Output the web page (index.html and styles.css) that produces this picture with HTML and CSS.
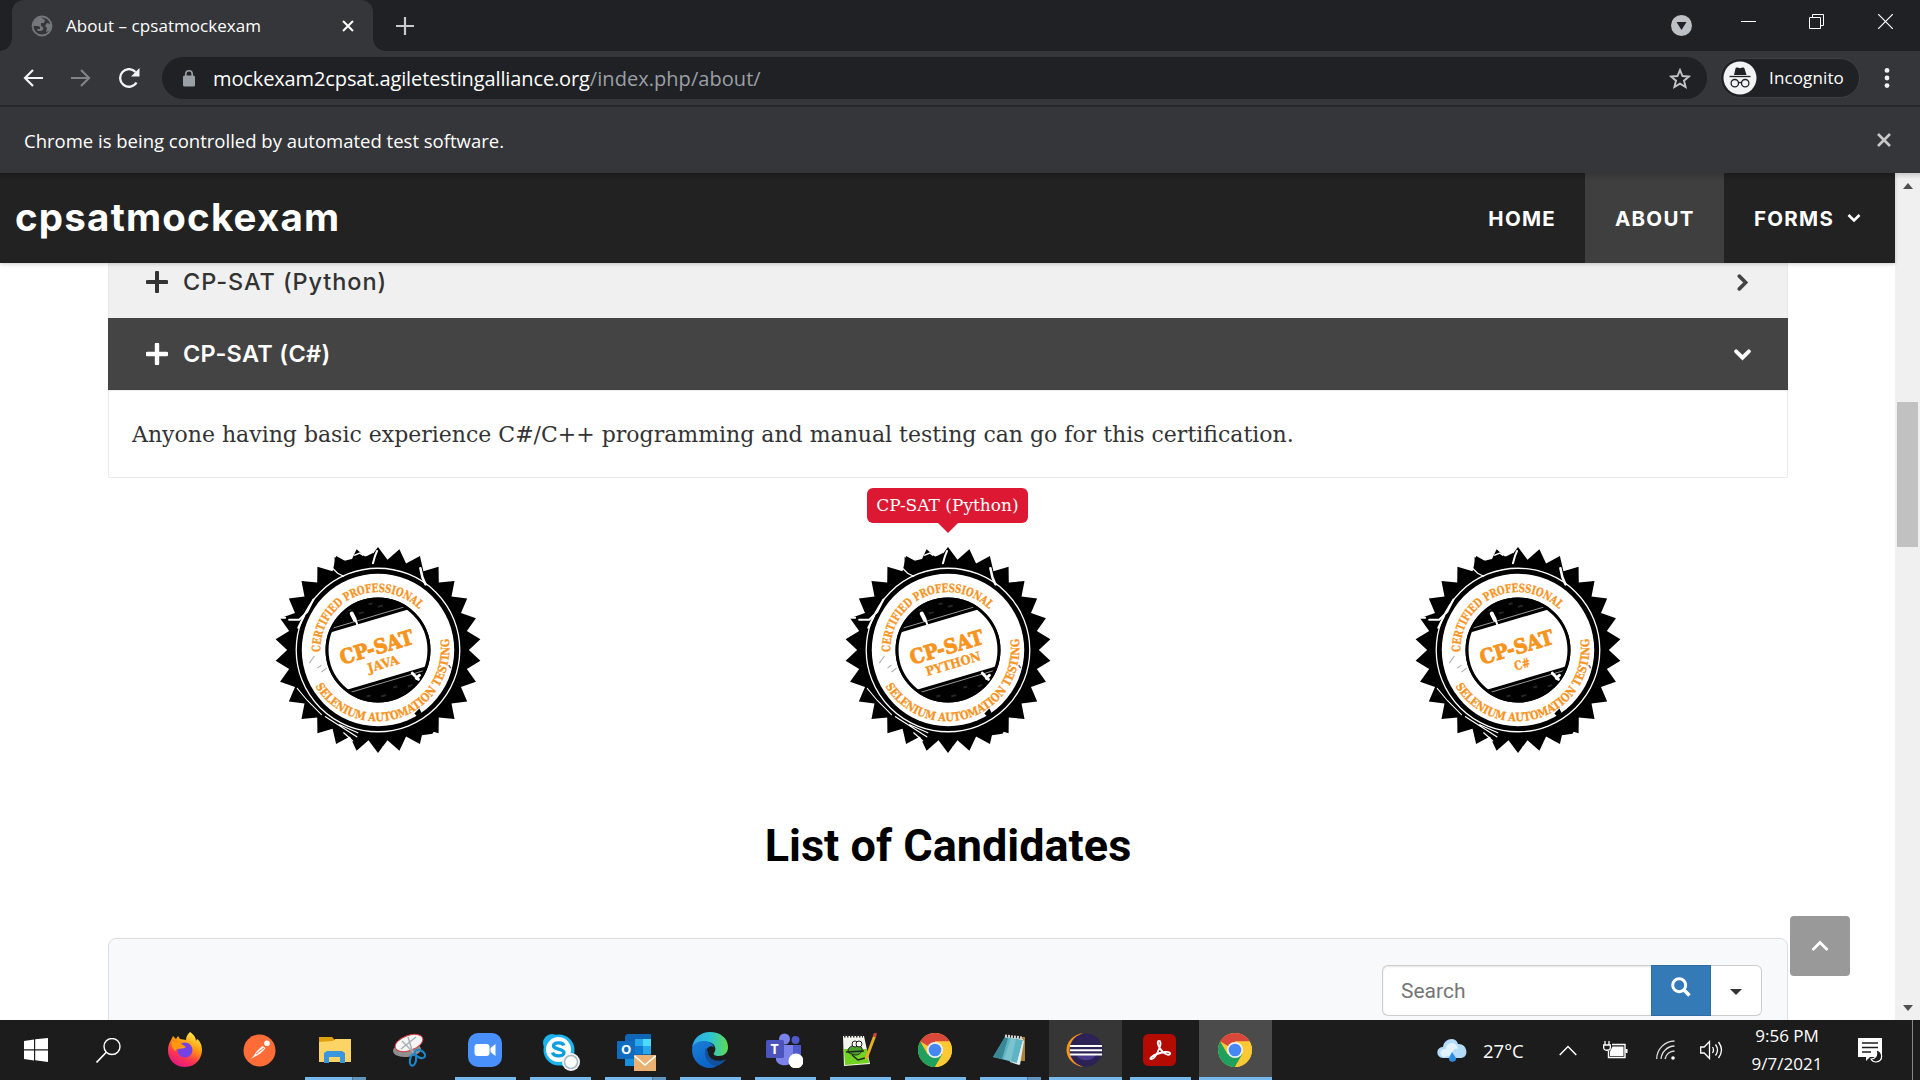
FILE: index.html
```html
<!DOCTYPE html>
<html lang="en">
<head>
<meta charset="utf-8">
<title>About – cpsatmockexam</title>
<link rel="stylesheet" href="styles.css">
</head>
<body>
<svg class="defs" width="0" height="0" aria-hidden="true">
  <defs>
    <path id="teeth" d="M0 0V-102L9.4-89.5 21.2-99.8 27.8-85.6 41.5-93.2 45-77.9 60-82.5 60.2-66.9 75.8-68.3 72.8-52.9 88.3-51 82.2-36.6 97-31.5 88-18.7 101.4-10.7 90 0Z"/>
    <path id="arc-top" d="M-57 2A57 57 0 0 1 46 -34"/>
    <path id="arc-bottom" d="M-62 36A71.500 71.500 0 0 0 70 -11"/>
    <clipPath id="inner"><circle r="50"/></clipPath>
    <g id="seal">
      <circle r="88"/>
      <use href="#teeth"/><use href="#teeth" transform="scale(-1 1)"/><use href="#teeth" transform="scale(1 -1)"/><use href="#teeth" transform="scale(-1 -1)"/>
      <path d="M-43-92l8 4 8-2 8-1 8-2 6-3 5 6v10h-43zM-40 80l8 8 5-4-4-8zM30 84l8-4 12-5 10-2-6 10-14 2z"/>
      <circle r="81" fill="none" stroke="#fff" stroke-width="1.300"/>
      <circle r="75.500" fill="#fff"/>
      <circle r="52"/>
      <g clip-path="url(#inner)">
        <g transform="rotate(-16.500)">
          <rect x="-60" y="-30" width="120" height="59" fill="#fff"/>
          <path d="M-60-33.500H60M-60 32.500H60" stroke="#aaa" stroke-width=".8"/>
          <path d="M-30-42h5M-18-46h4M-8-40h5M4-46h4M12-41h5M-24 41h4M-10 45h5M4 40h4M18 43h5" stroke="#262626" stroke-width="2"/>
        </g>
      </g>
      <circle r="50.500" fill="none" stroke="#000" stroke-width="3"/>
      <g fill="none" stroke="#fff" stroke-linecap="round">
        <path d="M-26-36l3 6" stroke-width="4"/><path d="M-22-29l2 5" stroke-width="2"/>
        <path d="M-5-86l2-7 2-5" stroke-width="2"/><path d="M-23-94l5-2 3 2" stroke-width="1.500"/>
        <path d="M42-81l2 9 3 7" stroke-width="2.500"/><path d="M-46-82l6 6 6 3" stroke-width="1.200"/>
        <path d="M-97-32h5M-88-30l10 0 8-8 6-12" stroke-width="2"/>
        <path d="M-73-34l-6 12" stroke-width="2"/>
        <path d="M-80 38l10 12 14 14" stroke-width="1"/><path d="M-52 66l14 9 17 11M-38 74l18 8M-34 82l9 8" stroke-width="1.200"/>
        <path d="M5 96h6" stroke-width="1.200"/><path d="M34 23l6 6M38 28l3-3" stroke-width="3"/>
      </g>
      <path d="M-68 13l5-7M-60 18l4-3M-56 22l5-4" stroke="#aaa" stroke-width="1"/>
      <path d="M70 15l2 3" stroke="#666" stroke-width="1.500"/>
      <path d="M36 63l5-5 2 4-3 5z"/>
      <g class="seal-ring">
        <text><textPath href="#arc-top" textLength="137" lengthAdjust="spacingAndGlyphs">CERTIFIED PROFESSIONAL</textPath></text>
        <text><textPath href="#arc-bottom" textLength="196" lengthAdjust="spacingAndGlyphs">SELENIUM AUTOMATION TESTING</textPath></text>
      </g>
      <text class="seal-name" transform="rotate(-16.500)" x="-38" y="4" textLength="75" lengthAdjust="spacingAndGlyphs">CP-SAT</text>
    </g>
    <symbol id="i-chrome" viewBox="0 0 34 34">
      <circle cx="17" cy="17" r="17" fill="#fcc934"/>
      <path d="M17 17L2.300 8.500A17 17 0 0 1 31.700 8.500H17Z" fill="#d9483b"/>
      <path d="M2.300 8.500A17 17 0 0 0 17 34L24.400 21.300 17 17 9.600 21.300Z" fill="#1fa15d"/>
      <path d="M17 8.500H31.700A17 17 0 0 1 17 34L24.400 21.300Z" fill="#fcc934"/>
      <circle cx="17" cy="17" r="8" fill="#f1f1f1"/><circle cx="17" cy="17" r="6.300" fill="#4587f3"/>
    </symbol>
  </defs>
</svg>

<header class="browser">
  <div class="tabstrip">
    <div class="tab">
      <svg class="favicon" viewBox="0 0 22 22"><circle cx="11" cy="11" r="9.500" fill="none" stroke="#74777c" stroke-width="1.800"/><path d="M10 2.500C5 3 2.500 7 2 11h5l2 1v2H6l1 2h3c2-1 3-2 2-4l-2-1V8h3l1-3-3-2zM20 9l-4-1-2 3 2 2-1 4 3-1c2-2 2.500-5 2-7z" fill="#74777c"/></svg>
      <span class="tab-title">About – cpsatmockexam</span>
      <svg class="tab-close" viewBox="0 0 12 12"><path d="M1 1l10 10M11 1L1 11" stroke="#fff" stroke-width="2"/></svg>
    </div>
    <svg class="new-tab" viewBox="0 0 18 18"><path d="M9 0v18M0 9h18" stroke="#c8cacd" stroke-width="2.200"/></svg>
    <div class="window-buttons">
      <svg width="21" height="21" viewBox="0 0 21 21"><circle cx="10.500" cy="10.500" r="10.500" fill="#bdc1c6"/><path d="M5.500 7h10l-5 8z" fill="#202124"/></svg>
      <svg width="15" height="15" viewBox="0 0 15 15"><path d="M0 7.500h15" stroke="#fff"/></svg>
      <svg width="15" height="15" viewBox="0 0 15 15"><path d="M.5 3.500h11v11H.5zM3.500 3.500v-3h11v11h-3" fill="none" stroke="#fff"/></svg>
      <svg width="15" height="15" viewBox="0 0 15 15"><path d="M0 0l15 15M15 0L0 15" stroke="#fff" stroke-width="1.200"/></svg>
    </div>
  </div>

  <div class="toolbar">
    <svg class="nav-icon" viewBox="0 0 20 18"><path d="M20 9H2M10 1L2 9l8 8" fill="none" stroke="#f1f3f4" stroke-width="2.200"/></svg>
    <svg class="nav-icon" viewBox="0 0 20 18"><path d="M0 9h18M10 1l8 8-8 8" fill="none" stroke="#828387" stroke-width="2.200"/></svg>
    <svg class="nav-reload" viewBox="0 0 21 20"><path d="M17.500 14.500A8.800 8.800 0 1 1 16.500 4" fill="none" stroke="#f1f3f4" stroke-width="2.300"/><path d="M20.500 0v8.500H12z" fill="#f1f3f4"/></svg>
    <div class="omnibox">
      <svg class="lock" viewBox="0 0 12 17"><rect y="5.500" width="12" height="11" rx="1.500" fill="#9aa0a6"/><path d="M2.800 6V4a3.200 3.200 0 0 1 6.400 0v2" fill="none" stroke="#9aa0a6" stroke-width="1.600"/></svg>
      <span class="url"><span class="host">mockexam2cpsat.agiletestingalliance.org</span><span class="path">/index.php/about/</span></span>
      <svg class="star" viewBox="0 0 22 21"><path d="M11 2l2.500 6 6.500.5-5 4.200 1.600 6.300L11 15.600 5.400 19 7 12.700 2 8.500 8.500 8z" fill="none" stroke="#c3c4c6" stroke-width="1.900"/></svg>
    </div>
    <div class="incognito">
      <svg viewBox="0 0 34 34"><circle cx="17" cy="17" r="16.500" fill="#f1f3f4"/><path d="M12.500 7.500q.5-1.500 2-1l2.500.7 2.500-.7q1.500-.5 2 1l2 6.500H11z" fill="#202124"/><path d="M6.500 15.500h21" stroke="#202124" stroke-width="1.300"/><circle cx="11.800" cy="22.200" r="3.700" fill="none" stroke="#202124" stroke-width="1.300"/><circle cx="22.200" cy="22.200" r="3.700" fill="none" stroke="#202124" stroke-width="1.300"/><path d="M15.500 22q1.500-1.200 3 0" fill="none" stroke="#202124" stroke-width="1.200"/></svg>
      <span class="incognito-label">Incognito</span>
    </div>
    <svg class="menu-dots" viewBox="0 0 6 20"><g fill="#f1f3f4"><circle cx="3" cy="2.400" r="2.400"/><circle cx="3" cy="10" r="2.400"/><circle cx="3" cy="17.600" r="2.400"/></g></svg>
  </div>

  <div class="infobar">
    <span class="infobar-text">Chrome is being controlled by automated test software.</span>
    <svg width="14" height="14" viewBox="0 0 14 14"><path d="M1 1l12 12M13 1L1 13" stroke="#c8c8c8" stroke-width="2.600"/></svg>
  </div>
</header>

<div class="viewport">
  <div class="page">
    <div class="site-header">
      <span class="site-title">cpsatmockexam</span>
      <nav class="site-nav">
        <a class="nav-home"><span>HOME</span></a>
        <a class="nav-about"><span>ABOUT</span></a>
        <a class="nav-forms"><span>FORMS</span><svg width="14" height="10" viewBox="0 0 14 10"><path d="M1.500 2L7 7.500 12.500 2" fill="none" stroke="#fff" stroke-width="2.600"/></svg></a>
      </nav>
    </div>

    <main class="content">
      <div class="accordion">
        <div class="acc-row acc-python">
          <svg class="plus" viewBox="0 0 22 22"><path d="M11 1.500v19M1.500 11h19" stroke="currentColor" stroke-width="4" stroke-linecap="round"/></svg>
          <span class="acc-label">CP-SAT (Python)</span>
          <svg class="chev" viewBox="0 0 16 16"><path d="M5 2l6 6-6 6" fill="none" stroke="#444" stroke-width="3.400" stroke-linecap="round"/></svg>
        </div>
        <div class="acc-row acc-open">
          <svg class="plus" viewBox="0 0 22 22"><path d="M11 1.500v19M1.500 11h19" stroke="currentColor" stroke-width="4.400" stroke-linecap="round"/></svg>
          <span class="acc-label">CP-SAT (C#)</span>
          <svg class="chev" viewBox="0 0 16 16"><path d="M2 5l6 6 6-6" fill="none" stroke="#fff" stroke-width="3.600" stroke-linecap="round"/></svg>
        </div>
        <div class="acc-body"><span class="acc-text">Anyone having basic experience C#/C++ programming and manual testing can go for this certification.</span></div>
      </div>

      <div class="badges">
        <div class="badge"><svg viewBox="-104 -104 208 208"><use href="#seal"/><text class="seal-sub" transform="rotate(-16.500)" x="-15" y="19" textLength="32" lengthAdjust="spacingAndGlyphs">JAVA</text></svg></div>
        <div class="badge"><span class="tooltip"><span class="tip-text">CP-SAT (Python)</span></span><svg viewBox="-104 -104 208 208"><use href="#seal"/><text class="seal-sub" transform="rotate(-16.500)" x="-27" y="19" textLength="56" lengthAdjust="spacingAndGlyphs">PYTHON</text></svg></div>
        <div class="badge"><svg viewBox="-104 -104 208 208"><use href="#seal"/><text class="seal-sub" transform="rotate(-16.500)" x="-8" y="19" textLength="16" lengthAdjust="spacingAndGlyphs">C#</text></svg></div>
      </div>

      <h2 class="list-title"><span>List of Candidates</span></h2>

      <div class="list-panel">
        <div class="search">
          <div class="search-input">Search</div>
          <div class="search-go"><svg width="20" height="20" viewBox="0 0 20 20"><circle cx="8.200" cy="8.200" r="6.500" fill="none" stroke="#fff" stroke-width="3"/><path d="M13 13l5.500 5.500" stroke="#fff" stroke-width="3.600"/></svg></div>
          <div class="search-more"><i></i></div>
        </div>
      </div>
      <div class="to-top"><svg width="18" height="12" viewBox="0 0 18 12"><path d="M1.500 10L9 2.500 16.500 10" fill="none" stroke="#fff" stroke-width="2.800"/></svg></div>
    </main>
  </div>
  <div class="scrollbar"><i class="arrow up"></i><i class="thumb"></i><i class="arrow down"></i></div>
</div>

<footer class="taskbar">
  <div class="start"><svg width="24" height="24" viewBox="0 0 24 24"><path d="M0 3l10-1.500V11.300H0zM11.200 1.300L24 0v11.300H11.200zM0 12.600h10v9.800L0 21zM11.200 12.600H24V24l-12.800-1.700z" fill="#fff"/></svg></div>
  <div class="start"><svg width="25" height="25" viewBox="0 0 25 25"><circle cx="16" cy="8.500" r="8" fill="none" stroke="#fff" stroke-width="1.400"/><path d="M10.300 14.300L.5 24.500" stroke="#fff" stroke-width="1.600"/></svg></div>
  <div class="apps">
    <div class="app"><svg width="36" height="36" viewBox="0 0 36 36"><defs><linearGradient id="ff" x1=".8" y1="0" x2=".3" y2="1"><stop offset="0" stop-color="#fff44f"/><stop offset=".4" stop-color="#ff980e"/><stop offset=".7" stop-color="#ff3750"/><stop offset="1" stop-color="#e31587"/></linearGradient></defs><path d="M23 0c-3 3-4 5-4 8l-6-1-2-3-2 3-3-3-4 8c-4 12 4 23 16 23 11 0 17-9 17-17 0-5-2-9-5-11l-1 2c0-4-3-7-6-9z" fill="url(#ff)"/><circle cx="18" cy="18" r="7.500" fill="#7542e5"/><path d="M5 9c5 1 7 0 11 4l3 2c-3 3-8 0-11 4-3-3-4-6-3-10z" fill="#ff980e"/></svg></div>
    <div class="app"><svg width="33" height="33" viewBox="0 0 33 33"><circle cx="16.500" cy="16.500" r="16" fill="#ff6c37"/><path d="M7.500 25c4-3 5-8 12-13l3 2c-5 7-10 8-13 10z" fill="#fff"/><circle cx="24" cy="9.300" r="2.800" fill="#fff"/><path d="M13 20l8-6" stroke="#ff6c37"/></svg></div>
    <div class="app open multi"><svg width="32" height="28" viewBox="0 0 32 28"><path d="M0 1h13l2 2v3H0z" fill="#e0a10c"/><path d="M0 6l14-1 2-2h16v23H0z" fill="#fcd365"/><path d="M5 27V17l3-2h15l3 2v10h-5v-6H10v6z" fill="#3a96dd"/></svg></div>
    <div class="app"><svg width="34" height="34" viewBox="0 0 34 34"><ellipse cx="14" cy="17" rx="14" ry="7" fill="#8d8f91" transform="rotate(-5 14 17)"/><ellipse cx="16" cy="10" rx="14.500" ry="7.500" fill="#f5f5f6" stroke="#dc3a3a" transform="rotate(-20 16 10)"/><path d="M15 4l5 16M9 8l11 11M23 4L8 16" stroke="#a9adb2" stroke-width="1.400"/><ellipse cx="27" cy="21" rx="5.500" ry="3.500" fill="none" stroke="#1d86c9" stroke-width="2.200" transform="rotate(30 27 21)"/><ellipse cx="20" cy="27" rx="3" ry="5.800" fill="none" stroke="#1d86c9" stroke-width="2.200" transform="rotate(10 20 27)"/></svg></div>
    <div class="app open"><svg width="34" height="34" viewBox="0 0 34 34"><rect width="34" height="34" rx="10" fill="#4a90fb"/><rect x="6.500" y="11" width="15" height="12" rx="3" fill="#fff"/><path d="M22.500 15l5-4v12l-5-4z" fill="#fff"/></svg></div>
    <div class="app open skype"><svg width="38" height="38" viewBox="0 0 38 38"><circle cx="10" cy="10" r="9" fill="#1cb4f0"/><circle cx="22" cy="23" r="10" fill="#1cb4f0"/><circle cx="17" cy="17" r="15.500" fill="#1cb4f0"/><circle cx="16.500" cy="16.500" r="12.500" fill="#fff"/><path d="M22 12.500c-1-3-9.500-4-10.500 0-.8 4 10.500 3 10.500 7 0 4.500-10 4.500-11.500 0" fill="none" stroke="#0c9fe0" stroke-width="3.400"/><circle cx="29" cy="29" r="9" fill="#f3f5f6"/><circle cx="29" cy="29" r="6.500" fill="#fff" stroke="#a9b9c3" stroke-width="1.600"/></svg></div>
    <div class="app open multi outlook"><svg width="39" height="37" viewBox="0 0 39 37"><path d="M10 0h24v30H8V2z" fill="#1066b5"/><path d="M18 5h8v7h-8z" fill="#28a8ea"/><path d="M26 5h8v7h-8z" fill="#50d9ff"/><path d="M18 12h8v8h-8z" fill="#0f78d0"/><path d="M26 12h8v8h-8z" fill="#28a8ea"/><path d="M8 24h12v8H8z" fill="#1490df"/><rect y="7" width="18" height="18" rx="1" fill="#0f6cbf"/><text class="glyph" x="4" y="20" font-size="13">O</text><path d="M17 21h22v16H17z" fill="#e9b272"/><path d="M17.500 22L28 31l10.500-9" fill="none" stroke="#fff" stroke-width="1.600"/></svg></div>
    <div class="app open"><svg width="36" height="36" viewBox="0 0 36 36"><defs><linearGradient id="eg"><stop offset="0" stop-color="#2ea8ea"/><stop offset=".5" stop-color="#2cc3d5"/><stop offset="1" stop-color="#5fdb50"/></linearGradient><linearGradient id="eb" x1="0" x2=".6" y2="1"><stop offset="0" stop-color="#1b80d8"/><stop offset="1" stop-color="#0b62c5"/></linearGradient></defs><path d="M0 16C1 6 9 0 18 0c10 0 18 6 18 15 0 6-4 9-9 9-4 0-6-1-5-3 3-4 1-10-6-11C8 9 3 11 0 16z" fill="url(#eg)"/><path d="M0 18c0-6 6-9 12-9 5 0 9 3 10 6-3-2-8 0-8 6 0 7 6 12 12 12-2 2-5 3-8 3C8 36 0 28 0 18z" fill="url(#eb)"/><path d="M14 16c-3 7 1 16 10 18 5-1 8-4 10-7-7 4-18 1-18-7z" fill="#124f9c"/></svg></div>
    <div class="app open"><svg width="37" height="35" viewBox="0 0 37 35"><circle cx="18.500" cy="6" r="5.500" fill="#7b83eb"/><circle cx="29.500" cy="7" r="4" fill="#5059c9"/><path d="M24 12h11v12l-5 5-6-4z" fill="#5059c9"/><path d="M10 12h17v15c-2 7-15 7-17 0z" fill="#7b83eb"/><rect y="7" width="18" height="18" rx="1.500" fill="#4b53bc"/><text class="glyph" x="4.500" y="21" font-size="14">T</text><circle cx="30" cy="28" r="7.500" fill="#fff"/></svg></div>
    <div class="app open"><svg width="35" height="34" viewBox="0 0 35 34"><path d="M1 3h21l6 28-26 2z" fill="#f4f6ee"/><path d="M2 16h23l2 14-24 2z" fill="#71d321"/><path d="M2 3h19" stroke="#333" stroke-width="3" stroke-dasharray="1.500 1.500"/><path d="M6 17c2-6 11-6 14-2 1 5-5 9-10 6-3 0-4-2-4-4z" fill="#49a52a" stroke="#222"/><circle cx="13" cy="11" r="3" fill="#fff" stroke="#222"/><circle cx="17" cy="11" r="3" fill="#fff" stroke="#222"/><path d="M4 19l18-1M10 22l6 5 7-2" stroke="#222" stroke-width="1.500" fill="none"/><path d="M33 2L24 26" stroke="#e8ad26" stroke-width="3"/><path d="M33.500 0l-1 4" stroke="#c44" stroke-width="3"/></svg></div>
    <div class="app open"><svg width="34" height="34"><use href="#i-chrome"/></svg></div>
    <div class="app open multi"><svg width="34" height="32" viewBox="0 0 34 32"><path d="M28 3h4v24h-5z" fill="#a98336"/><path d="M12 3l18 2-4 26-9-3z" fill="#e8eef0"/><path d="M12 3L0 23l24 6L30 6z" fill="#5fb4c4"/><path d="M12 3L0 23l9 2 6-21z" fill="#3a8796"/><path d="M18 4L11 25l7 2 5-22z" fill="#7cc3d0"/><path d="M30 6l-6 23 3 2 4-24z" fill="#e8eef0"/><path d="M12 2l18 2" stroke="#d5d5d5" stroke-width="3" stroke-dasharray="2 1"/></svg></div>
    <div class="app open wide"><svg width="37" height="34" viewBox="0 0 37 34"><path d="M17 0C-5 4-5 30 17 34 4 26 4 8 17 0z" fill="#f7941e"/><circle cx="20" cy="17" r="16.500" fill="#2c2255"/><path d="M10 22h20c-4 7-16 7-20 0z" fill="#4a3a8b"/><path d="M4 13h32M4 17.300h32M4 21.500h32" stroke="#fff" stroke-width="2"/></svg></div>
    <div class="app open"><svg width="33" height="32" viewBox="0 0 33 32"><rect width="33" height="32" rx="5.500" fill="#b30b00"/><path d="M16 7c-3 0 0 7 3 10 3 4 9 5 8 2-1-2-8-1-13 1-5 2-8 5-6 5 3 1 6-5 8-10 2-4 2-8 0-8z" fill="none" stroke="#fff" stroke-width="1.900"/></svg></div>
    <div class="app open wide active"><svg width="34" height="34"><use href="#i-chrome"/></svg></div>
  </div>
  <div class="tray">
    <svg class="t-weather" width="30" height="25" viewBox="0 0 30 25"><path d="M6 20C-2 19-1 9 6 9 7 0 19-2 21 6c9-1 12 13 3 14z" fill="#b4dcf8"/><path d="M7 19c-6-2-4-9 2-8 0-8 11-8 12 0-4-1-6 3-6 6z" fill="#e0f3ff"/><path d="M15 14l4 6c1 5-8 5-7 0z" fill="#2d8be0"/></svg>
    <span class="temp">27°C</span>
    <svg class="t-up" width="18" height="11" viewBox="0 0 18 11"><path d="M.7 10L9 1.500 17.300 10" fill="none" stroke="#fff" stroke-width="1.500"/></svg>
    <svg class="t-bat" width="25" height="18" viewBox="0 0 25 18"><path d="M9 3.500h13v13H5.500V10" fill="none" stroke="#fff" stroke-width="1.400"/><path d="M9.500 5.500h11v9.500H7v-4.500z" fill="#fff"/><path d="M23.500 8v4" stroke="#fff" stroke-width="2"/><path d="M2 0v4M6 0v4M.7 4h6.600v3c0 3-6.600 3-6.600 0z" fill="none" stroke="#fff" stroke-width="1.300"/></svg>
    <svg class="t-wifi" width="20" height="20" viewBox="0 0 20 20"><g fill="none" stroke="#ddd" stroke-width="1.300"><path d="M.7 19A18 18 0 0 1 18.500 1"/><path d="M5 19A14 14 0 0 1 18.500 6"/><path d="M9 19a10 10 0 0 1 9.500-8"/></g><circle cx="17" cy="18" r="1.800" fill="#fff"/></svg>
    <svg class="t-vol" width="23" height="20" viewBox="0 0 23 20"><g fill="none" stroke="#fff" stroke-width="1.300"><path d="M.7 7h3.500L9.500 1.500v17L4.200 13H.7z"/><path d="M12.500 7q2 3 0 6M15.500 4.500q4 5.500 0 11M18.500 2q6 8 0 16"/></g></svg>
    <div class="clock"><span class="time">9:56 PM</span><span class="date">9/7/2021</span></div>
    <svg class="t-note" width="25" height="25" viewBox="0 0 25 25"><path d="M0 0h24v19h-12l-4 4v-4H0z" fill="#fff"/><path d="M4 5h16M4 9.500h16M4 14h9" stroke="#1c1c1c" stroke-width="1.500"/><path d="M18 12c7 1 8 11 0 12-2 0-4-1-5-3 4 0 7-3 5-9z" fill="#1c1c1c" stroke="#fff" stroke-width="1.200"/></svg>
    <i class="peek"></i>
  </div>
</footer>
</body>
</html>
```
FILE: styles.css
```css
* { box-sizing: border-box; }
body {
  margin: 0;
  width: 1920px;
  height: 1080px;
  overflow: hidden;
  display: flex;
  flex-direction: column;
  background: #fff;
  font-family: "Open Sans", sans-serif;
  white-space: nowrap;
}
svg { display: block; flex: none; }
.defs { position: absolute; }

/* browser frame */
.browser { flex: none; height: 173px; color: #fff; background: #35363a; }
.tabstrip { display: flex; align-items: flex-start; height: 51px; background: #202124; }
.tab {
  position: relative;
  display: flex;
  align-items: center;
  width: 361px;
  height: 51px;
  margin-left: 12px;
  padding-left: 19px;
  border-radius: 12px 12px 0 0;
  background: #35363a;
}
.tab::before, .tab::after {
  content: "";
  position: absolute;
  bottom: 0;
  width: 12px;
  height: 12px;
}
.tab::before { left: -12px; background: radial-gradient(circle at 0 0, #202124 11.500px, #35363a 12px); }
.tab::after { right: -12px; background: radial-gradient(circle at 100% 0, #202124 11.500px, #35363a 12px); }
.favicon { width: 22px; height: 22px; }
.tab-title { margin-left: 13px; font-size: 17px; letter-spacing: .05px; }
.tab-close { width: 12px; height: 12px; margin: 0 19px 0 auto; }
.new-tab { width: 18px; height: 18px; margin: 17px 0 0 23px; }
.window-buttons { display: flex; align-items: center; margin: 12px 27px 0 auto; }
.window-buttons svg:nth-child(1) { margin: 3px 49px 0 0; }
.window-buttons svg:nth-child(2) { margin-right: 53px; }
.window-buttons svg:nth-child(3) { margin-right: 54px; }
.window-buttons svg:nth-child(n+2) { margin-bottom: 6px; }

.toolbar { display: flex; align-items: center; height: 56px; padding: 0 30px 0 23px; border-bottom: 2px solid #27282b; }
.nav-icon { width: 20px; height: 18px; margin-right: 28px; }
.nav-reload { width: 21px; height: 20px; margin-right: 22px; }
.omnibox { display: flex; align-items: center; width: 1545px; height: 42px; padding: 0 16px 0 21px; border-radius: 21px; background: #202124; }
.lock { width: 12px; height: 17px; }
.url { margin-left: 18px; font-size: 20px; }
.host { letter-spacing: -.120px; }
.path { letter-spacing: .05px; color: #9aa0a6; }
.star { width: 22px; height: 21px; margin-left: auto; }
.incognito { display: flex; align-items: center; width: 140px; height: 40px; margin-left: 13px; padding-left: 2px; border: 1px solid #3f4044; border-radius: 20px; background: #202124; }
.incognito svg { width: 34px; height: 34px; }
.incognito-label { margin-left: 12px; padding-bottom: 2px; font-size: 17px; letter-spacing: .130px; }
.menu-dots { width: 6px; height: 20px; margin-left: 24px; }

.infobar { display: flex; align-items: center; justify-content: space-between; height: 66px; padding: 0 29px 0 24px; font-size: 18.500px; }

/* web page */
.viewport { display: flex; flex: none; height: 847px; overflow: hidden; }
.page { width: 1895px; }
.site-header {
  position: relative;
  z-index: 1;
  display: flex;
  align-items: center;
  justify-content: space-between;
  height: 90px;
  padding-left: 15px;
  background: linear-gradient(#1b1b1b, #222 8px);
  box-shadow: 0 1px 4px rgba(0, 0, 0, .2);
  color: #fff;
  font-family: Inter, sans-serif;
}
.site-title { padding-bottom: 2px; font-size: 38.500px; font-weight: 700; letter-spacing: 1.200px; }
.site-nav { display: flex; height: 90px; font-size: 20.500px; font-weight: 700; letter-spacing: 1.250px; }
.site-nav a { display: flex; align-items: center; padding: 0 29px 0 30px; }
.nav-about { width: 139px; background: linear-gradient(#353535, #3f3f3f 8px); }
.nav-forms { width: 171px; gap: 13px; }

.content { position: relative; height: 757px; padding: 0 107px 0 108px; overflow: hidden; }
.accordion { margin-top: -17px; }
.acc-row { display: flex; align-items: center; height: 72px; padding: 0 37px 0 38px; font: 500 23.500px Inter, sans-serif; }
.acc-label { padding-bottom: 2px; }
.acc-python { background: #f0f0f0; color: #333; border: solid #e8e8e8; border-width: 0 1px; padding: 0 36px 0 37px; letter-spacing: .9px; }
.acc-open { background: #444; color: #fff; font-weight: 600; letter-spacing: .3px; }
.plus { width: 22px; height: 22px; margin-right: 15px; }
.chev { width: 17px; height: 17px; margin-left: auto; }
.acc-body { display: flex; align-items: center; height: 88px; padding-left: 23px; border: 1px solid #ebebeb; color: #333; font: 22px "DejaVu Serif", serif; }

.badges { display: grid; grid-template-columns: repeat(3, 570px); width: 1710px; margin: 67px 0 0 -15px; }
.badge { position: relative; display: flex; justify-content: center; height: 210px; }
.badge > svg { width: 210px; height: 210px; }
.seal-ring { fill: #f7941e; stroke: #f7941e; stroke-width: .3px; font: 700 11.500px "DejaVu Serif", serif; }
.seal-name { fill: #f7941e; stroke: #f7941e; stroke-width: .9px; font: 700 20px "DejaVu Serif", serif; }
.seal-sub { fill: #f7941e; stroke: #f7941e; stroke-width: .3px; font: 700 12.500px "DejaVu Serif", serif; }
.tooltip {
  position: absolute;
  top: -57px;
  left: 204px;
  display: flex;
  align-items: center;
  justify-content: center;
  width: 161px;
  height: 35px;
  padding-bottom: 1px;
  border-radius: 6px;
  background: #dd1832;
  color: #fff;
  font: 17px "DejaVu Serif", serif;
}
.tooltip::after {
  content: "";
  position: absolute;
  top: 35px;
  left: 71px;
  border: 10px solid transparent;
  border-top-color: #dd1832;
  border-bottom: 0;
}
.list-title { height: 54px; margin: 64px 0 0; text-align: center; color: #000; font: 700 45px/54px Roboto, sans-serif; }
.list-panel { height: 120px; margin-top: 65px; padding: 26px 25px 0; border: 1px solid #ddd; border-radius: 8px; background: #f8f9fb; }
.search { display: flex; justify-content: flex-end; height: 51px; font: 21px/50px Roboto, sans-serif; }
.search-input { width: 269px; padding-left: 18px; border: 1px solid #ccc; border-right: 0; border-radius: 6px 0 0 6px; background: #fff; box-shadow: inset 0 1px 2px rgba(0, 0, 0, .1); color: #757575; }
.search-go { display: flex; justify-content: center; width: 60px; padding-top: 11px; background: #337ab7; border: 1px solid #2e6da4; }
.search-more { width: 51px; border: 1px solid #ccc; border-left: 0; border-radius: 0 6px 6px 0; background: #fff; }
.search-more i { display: block; width: 0; margin: 23px auto 0 19px; border: 6px solid transparent; border-top-color: #333; border-bottom: 0; }
.to-top { position: absolute; top: 653px; left: 1790px; display: flex; align-items: center; justify-content: center; width: 60px; height: 60px; border-radius: 4px; background: #999; }

.scrollbar { display: flex; flex-direction: column; align-items: center; width: 25px; background: linear-gradient(#ccc, #f0f0f0 6px); }
.arrow { border: 5.500px solid transparent; }
.up { margin-top: 10px; border-top: 0; border-bottom: 6px solid #505050; }
.thumb { width: 21px; height: 145px; margin-top: 213px; background: #c1c1c1; }
.down { margin: auto 0 9px; border-bottom: 0; border-top: 6px solid #505050; }

/* taskbar */
.taskbar { display: flex; height: 60px; background: #1c1c1c; color: #fff; }
.start { display: flex; align-items: center; justify-content: center; width: 72px; }
.apps { display: flex; gap: 2px; margin-left: 5px; }
.app { position: relative; display: flex; align-items: center; justify-content: center; width: 73px; padding-right: 2px; }
.skype, .outlook { padding: 4px 0 0 1px; }
.open::after { content: ""; position: absolute; bottom: 0; left: 6px; width: 61px; height: 3px; background: #76b9ed; }
.multi::after { background: linear-gradient(90deg, #76b9ed 47px, #4a7698 47px, #4a7698 48px, #6295bd 48px); }
.app.wide { background: #363636; }
.wide::after { left: 0; width: 73px; }
.app.active { background: #4b4b4b; }
.glyph { fill: #fff; font-family: "Open Sans", sans-serif; font-weight: 700; }
.tray { display: flex; align-items: center; flex: 1; margin-left: 165px; }
.temp { width: 44px; margin: 0 32px 0 16px; font-size: 18.500px; }
.t-up { margin-right: 26px; }
.t-bat { margin-right: 28px; }
.t-wifi { margin-right: 24px; }
.clock { display: flex; flex-direction: column; align-items: center; width: 80px; margin-left: 24px; font-size: 17px; line-height: 28px; }
.t-note { margin-left: 31px; }
.peek { width: 1px; height: 60px; margin-left: 29px; background: #888; }
```
